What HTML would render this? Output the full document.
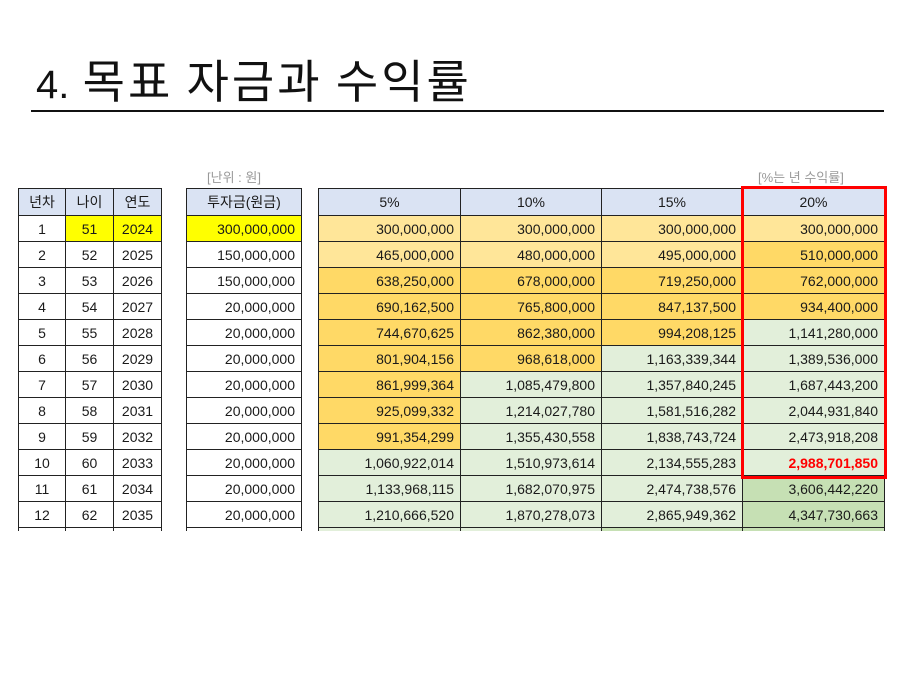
<!DOCTYPE html>
<html><head><meta charset="utf-8"><style>
body{margin:0;width:912px;height:684px;background:#fff;position:relative;overflow:hidden;font-family:"Liberation Sans","Noto Sans CJK KR",sans-serif;}
.title{position:absolute;left:36px;top:48px;font-size:46px;color:#111;font-family:"Noto Sans CJK KR","Liberation Sans",sans-serif;line-height:62px;letter-spacing:3px}
.title .n{font-family:"Liberation Sans",sans-serif;font-size:40px;letter-spacing:0}
.hr{position:absolute;left:31px;top:110px;width:853px;height:2px;background:#111}
table{position:absolute;border-collapse:collapse;font-size:14px;color:#1a1a1a;table-layout:fixed}
td{border:1px solid #222;height:25px;padding:0 6px;white-space:nowrap;overflow:hidden}
tr.h td{height:26px;background:#dae3f3;text-align:center;border-width:1.5px}
.c{text-align:center}.r{text-align:right}
.y{background:#ffff00}
.a{background:#ffe699}.b{background:#ffd966}.g{background:#e2efda}.G{background:#c6e0b4}
tr.p td{height:3px;border-bottom:none}
.note{position:absolute;font-size:13px;color:#999}
.red{position:absolute;left:741px;top:186px;width:140px;height:287px;border:3px solid #f00}
</style></head><body>
<div class="title"><span class="n">4.</span> 목표 자금과 수익률</div>
<div class="hr"></div>
<div class="note" style="left:207px;top:167px">[난위 : 원]</div>
<div class="note" style="left:758px;top:167px">[%는 년 수익률]</div>

<table style="left:18px;top:188px;width:143px">
<col style="width:47px"><col style="width:48px"><col style="width:48px">
<tr class="h"><td>년차</td><td>나이</td><td>연도</td></tr>
<tr><td class="c">1</td><td class="c y">51</td><td class="c y">2024</td></tr>
<tr><td class="c">2</td><td class="c">52</td><td class="c">2025</td></tr>
<tr><td class="c">3</td><td class="c">53</td><td class="c">2026</td></tr>
<tr><td class="c">4</td><td class="c">54</td><td class="c">2027</td></tr>
<tr><td class="c">5</td><td class="c">55</td><td class="c">2028</td></tr>
<tr><td class="c">6</td><td class="c">56</td><td class="c">2029</td></tr>
<tr><td class="c">7</td><td class="c">57</td><td class="c">2030</td></tr>
<tr><td class="c">8</td><td class="c">58</td><td class="c">2031</td></tr>
<tr><td class="c">9</td><td class="c">59</td><td class="c">2032</td></tr>
<tr><td class="c">10</td><td class="c">60</td><td class="c">2033</td></tr>
<tr><td class="c">11</td><td class="c">61</td><td class="c">2034</td></tr>
<tr><td class="c">12</td><td class="c">62</td><td class="c">2035</td></tr>
<tr class="p"><td></td><td></td><td></td></tr>
</table>

<table style="left:186px;top:188px;width:115px">
<col style="width:115px">
<tr class="h"><td>투자금(원금)</td></tr>
<tr><td class="r y">300,000,000</td></tr>
<tr><td class="r">150,000,000</td></tr>
<tr><td class="r">150,000,000</td></tr>
<tr><td class="r">20,000,000</td></tr>
<tr><td class="r">20,000,000</td></tr>
<tr><td class="r">20,000,000</td></tr>
<tr><td class="r">20,000,000</td></tr>
<tr><td class="r">20,000,000</td></tr>
<tr><td class="r">20,000,000</td></tr>
<tr><td class="r">20,000,000</td></tr>
<tr><td class="r">20,000,000</td></tr>
<tr><td class="r">20,000,000</td></tr>
<tr class="p"><td></td></tr>
</table>

<table style="left:318px;top:188px;width:566px">
<col style="width:142px"><col style="width:141px"><col style="width:141px"><col style="width:142px">
<tr class="h"><td>5%</td><td>10%</td><td>15%</td><td>20%</td></tr>
<tr><td class="r a">300,000,000</td><td class="r a">300,000,000</td><td class="r a">300,000,000</td><td class="r a">300,000,000</td></tr>
<tr><td class="r a">465,000,000</td><td class="r a">480,000,000</td><td class="r a">495,000,000</td><td class="r b">510,000,000</td></tr>
<tr><td class="r b">638,250,000</td><td class="r b">678,000,000</td><td class="r b">719,250,000</td><td class="r b">762,000,000</td></tr>
<tr><td class="r b">690,162,500</td><td class="r b">765,800,000</td><td class="r b">847,137,500</td><td class="r b">934,400,000</td></tr>
<tr><td class="r b">744,670,625</td><td class="r b">862,380,000</td><td class="r b">994,208,125</td><td class="r g">1,141,280,000</td></tr>
<tr><td class="r b">801,904,156</td><td class="r b">968,618,000</td><td class="r g">1,163,339,344</td><td class="r g">1,389,536,000</td></tr>
<tr><td class="r b">861,999,364</td><td class="r g">1,085,479,800</td><td class="r g">1,357,840,245</td><td class="r g">1,687,443,200</td></tr>
<tr><td class="r b">925,099,332</td><td class="r g">1,214,027,780</td><td class="r g">1,581,516,282</td><td class="r g">2,044,931,840</td></tr>
<tr><td class="r b">991,354,299</td><td class="r g">1,355,430,558</td><td class="r g">1,838,743,724</td><td class="r g">2,473,918,208</td></tr>
<tr><td class="r g">1,060,922,014</td><td class="r g">1,510,973,614</td><td class="r g">2,134,555,283</td><td class="r g" style="color:#f00;font-weight:bold">2,988,701,850</td></tr>
<tr><td class="r g">1,133,968,115</td><td class="r g">1,682,070,975</td><td class="r g">2,474,738,576</td><td class="r G">3,606,442,220</td></tr>
<tr><td class="r g">1,210,666,520</td><td class="r g">1,870,278,073</td><td class="r g">2,865,949,362</td><td class="r G">4,347,730,663</td></tr>
<tr class="p"><td class="g"></td><td class="g"></td><td class="G"></td><td class="G"></td></tr>
</table>
<div class="red"></div>
</body></html>
